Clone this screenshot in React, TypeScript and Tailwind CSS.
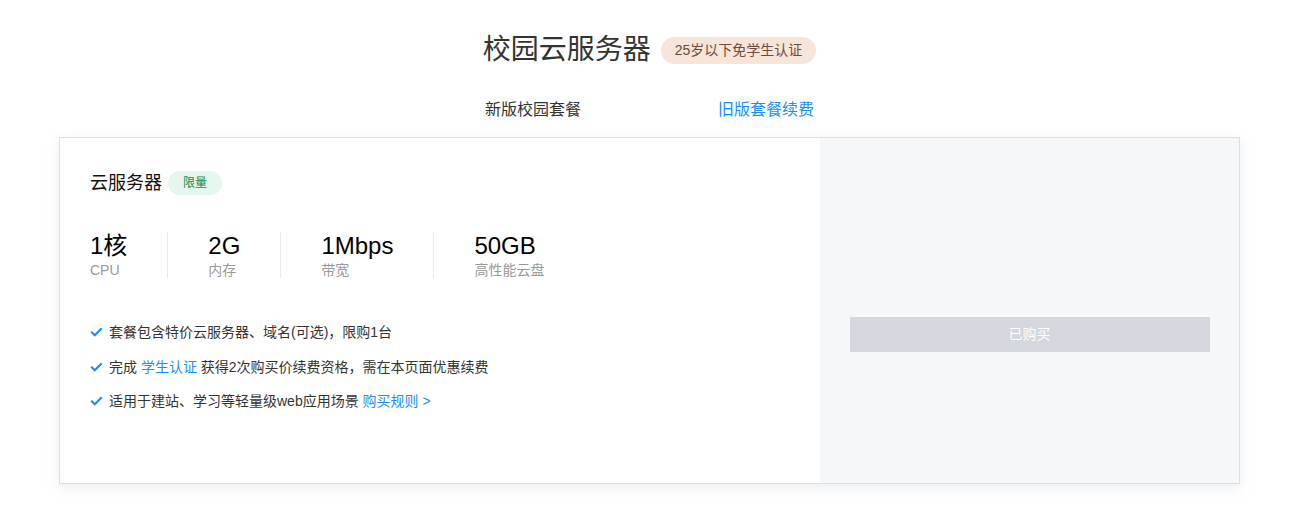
const specs = [
  { value: '1核', label: 'CPU' },
  { value: '2G', label: '内存' },
  { value: '1Mbps', label: '带宽' },
  { value: '50GB', label: '高性能云盘' },
]

const Check = () => (
  <svg width="13" height="10" viewBox="0 0 13 10" className="shrink-0">
    <path d="M1.2 4.8 L4.8 8.3 L11.8 1.3" fill="none" stroke="#1a8ff5" strokeWidth="2.2" />
  </svg>
)

export default function App() {
  return (
    <div
      className="w-[1299px] h-[516px] bg-white text-[#333]"
      style={{ fontFamily: '"Liberation Sans", "Noto Sans CJK SC", sans-serif' }}
    >
      <div className="flex items-center justify-center pt-[30px] gap-[10px]">
        <h1 className="text-[28px] leading-[40px] text-[#333]">校园云服务器</h1>
        <span className="h-[27px] px-[14px] rounded-full bg-[#f7e5da] text-[#6e4c3c] text-[14px] leading-[27px]">
          25岁以下免学生认证
        </span>
      </div>

      <div className="flex justify-center mt-[28px] text-[16px] leading-[24px]">
        <div className="w-[233px] text-center text-[#333]">新版校园套餐</div>
        <div className="w-[233px] text-center text-[#1a8ff5]">旧版套餐续费</div>
      </div>

      <div className="mx-[59px] mt-[15px] h-[347px] border border-[#dcdee2] shadow-[0_4px_12px_rgba(200,205,215,0.35)] flex">
        <div className="w-[760px] bg-white pl-[30px] pt-[32px]">
          <div className="flex items-center gap-[6px]">
            <span className="text-[18px] leading-[26px] text-[#111]">云服务器</span>
            <span className="h-[24px] w-[54px] rounded-full bg-[#e5f6ec] text-[#0a8d4f] text-[12px] leading-[24px] text-center">
              限量
            </span>
          </div>

          <div className="flex mt-[36px]">
            {specs.map((s, i) => (
              <div
                key={s.label}
                className={`${i === 0 ? 'pr-10' : 'px-10'} ${i < specs.length - 1 ? 'border-r border-[#e8e9eb]' : ''} h-[46px]`}
              >
                <div className="text-[24px] leading-[28px] text-[#000]">{s.value}</div>
                <div className="text-[14px] leading-[20px] text-[#999]">{s.label}</div>
              </div>
            ))}
          </div>

          <ul className="mt-[44px] text-[14px] leading-[20px] text-[#333] flex flex-col gap-[14.5px]">
            <li className="flex items-center gap-[6px]">
              <Check />
              <span>套餐包含特价云服务器、域名(可选)，限购1台</span>
            </li>
            <li className="flex items-center gap-[6px]">
              <Check />
              <span>
                完成 <span className="text-[#1a8ff5]">学生认证</span> 获得2次购买价续费资格，需在本页面优惠续费
              </span>
            </li>
            <li className="flex items-center gap-[6px]">
              <Check />
              <span>
                适用于建站、学习等轻量级web应用场景 <span className="text-[#1a8ff5]">购买规则 &gt;</span>
              </span>
            </li>
          </ul>
        </div>

        <div className="flex-1 bg-[#f6f7f9] flex items-center justify-center">
          <button className="w-[360px] h-[35px] bg-[#d4d7de] text-white text-[14px] mt-[48px]">已购买</button>
        </div>
      </div>
    </div>
  )
}
